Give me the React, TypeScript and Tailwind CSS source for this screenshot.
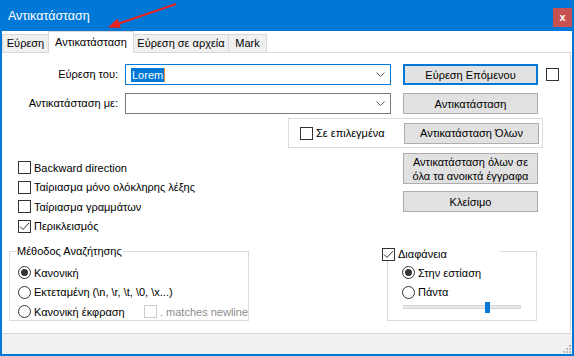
import React from 'react';
import clsx from 'clsx';

const CheckBox = ({ checked = false, disabled = false }: { checked?: boolean; disabled?: boolean }) => (
  <span
    className={clsx(
      'w-[13px] h-[13px] shrink-0 border bg-white flex items-center justify-center',
      disabled ? 'border-[#cccccc]' : 'border-[#333333]'
    )}
  >
    {checked && (
      <svg width="11" height="11" viewBox="0 0 11 11">
        <path d="M1 5.5 L4 8.5 L10 2" fill="none" stroke="#333333" strokeWidth="1" />
      </svg>
    )}
  </span>
);

const Radio = ({ checked = false }: { checked?: boolean }) => (
  <span className="w-[13px] h-[13px] shrink-0 rounded-full border border-[#333333] bg-white flex items-center justify-center">
    {checked && <span className="w-[7px] h-[7px] rounded-full bg-[#333333]" />}
  </span>
);

const Btn = ({ children, primary = false, tall = false }: { children: React.ReactNode; primary?: boolean; tall?: boolean }) => (
  <div
    className={clsx(
      'w-[135px] shrink-0 bg-[#e1e1e1] flex items-center justify-center text-center leading-[14px]',
      primary ? 'border-2 border-[#0078d7]' : 'border border-[#adadad]',
      tall ? 'h-[31px]' : 'h-[21px]'
    )}
  >
    {children}
  </div>
);

const Combo = ({ focused = false, children }: { focused?: boolean; children?: React.ReactNode }) => (
  <div
    className={clsx(
      'w-[266px] h-[21px] shrink-0 bg-white border flex items-center',
      focused ? 'border-[#0078d7]' : 'border-[#7a7a7a]'
    )}
  >
    <div className="flex-1 pl-[5px] flex items-center">{children}</div>
    <svg width="9" height="5" viewBox="0 0 9 5" className="mr-[5px]">
      <path d="M0.5 0.5 L4.5 4.5 L8.5 0.5" fill="none" stroke="#606060" strokeWidth="1" />
    </svg>
  </div>
);

const Row = ({ children }: { children: React.ReactNode }) => (
  <div className="h-[19.5px] flex items-center gap-[3px]">{children}</div>
);

export default function App() {
  return (
    <div className="w-[574px] h-[356px] bg-[#0078d7] px-[2px] pb-[2px] flex flex-col relative font-['Liberation_Sans','DejaVu_Sans',sans-serif] text-[11px] text-black">
      {/* Title bar */}
      <div className="h-[31px] flex items-start shrink-0">
        <span className="pl-[6px] pt-[7px] text-white text-[12.5px]">Αντικατάσταση</span>
        <div className="ml-auto mt-[8px] w-[19px] h-[19px] bg-[#c75050] flex items-center justify-center text-white font-bold text-[11px] leading-none">
          x
        </div>
      </div>

      <div className="flex-1 bg-white flex flex-col">
        {/* Tabs */}
        <div className="h-[21px] flex items-end shrink-0">
          <div className="w-[46px] h-[18px] bg-[#f0f0f0] border-t border-l border-[#d9d9d9] flex items-center justify-center">Εύρεση</div>
          <div className="w-[86px] h-[22px] -mb-px relative z-10 bg-white border-t border-l border-r border-[#d9d9d9] flex items-center justify-center">
            Αντικατάσταση
          </div>
          <div className="w-[94px] h-[18px] bg-[#f0f0f0] border-t border-[#d9d9d9] flex items-center justify-center">Εύρεση σε αρχεία</div>
          <div className="w-[39px] h-[18px] bg-[#f0f0f0] border-t border-l border-r border-[#d9d9d9] flex items-center justify-center">Mark</div>
        </div>

        {/* Panel */}
        <div className="h-[282px] mr-px border-t border-r border-b border-[#d9d9d9] flex flex-col shrink-0">
          {/* Find row */}
          <div className="h-[21px] mt-[11px] flex items-center">
            <span className="w-[116px] text-right">Εύρεση του:</span>
            <div className="ml-[7px]">
              <Combo focused>
                <span className="bg-[#0078d7] text-white px-px leading-[14px]">Lorem</span>
                <span className="w-px h-[14px] bg-[#e8912f]" />
              </Combo>
            </div>
            <div className="ml-[12px]">
              <Btn primary>Εύρεση Επόμενου</Btn>
            </div>
            <div className="ml-[8px]">
              <CheckBox />
            </div>
          </div>

          {/* Replace row */}
          <div className="h-[21px] mt-[8px] flex items-center">
            <span className="w-[116px] text-right">Αντικατάσταση με:</span>
            <div className="ml-[7px]">
              <Combo />
            </div>
            <div className="ml-[12px]">
              <Btn>Αντικατάσταση</Btn>
            </div>
          </div>

          {/* In selection group */}
          <div className="ml-[286px] mt-[4px] w-[255px] h-[30px] border border-[#dcdcdc] flex items-center">
            <div className="ml-[11px] flex items-center gap-[3px]">
              <CheckBox />
              <span>Σε επιλεγμένα</span>
            </div>
            <div className="ml-auto mr-[3px]">
              <Btn>Αντικατάσταση Όλων</Btn>
            </div>
          </div>

          {/* Options and buttons */}
          <div className="h-[103px] flex shrink-0">
            <div className="w-[401px] pl-[16px] pt-[10px] flex flex-col">
              <Row>
                <CheckBox />
                <span>Backward direction</span>
              </Row>
              <Row>
                <CheckBox />
                <span>Ταίριασμα μόνο ολόκληρης λέξης</span>
              </Row>
              <Row>
                <CheckBox />
                <span>Ταίριασμα γραμμάτων</span>
              </Row>
              <Row>
                <CheckBox checked />
                <span>Περικλεισμός</span>
              </Row>
            </div>
            <div className="pt-[5px] flex flex-col gap-[7px]">
              <Btn tall>
                Αντικατάσταση όλων σε
                <br />
                όλα τα ανοικτά έγγραφα
              </Btn>
              <Btn>Κλείσιμο</Btn>
            </div>
          </div>

          {/* Groups */}
          <div className="flex">
            <div className="ml-[7px] w-[240px] h-[70px] border border-[#dcdcdc] relative pl-[8px] pt-[11px]">
              <span className="absolute left-[6px] top-[-8px] bg-white px-px leading-[15px]">Μέθοδος Αναζήτησης</span>
              <Row>
                <Radio checked />
                <span>Κανονική</span>
              </Row>
              <Row>
                <Radio />
                <span>Εκτεταμένη (\n, \r, \t, \0, \x...)</span>
              </Row>
              <Row>
                <Radio />
                <span className="w-[107px]">Κανονική έκφραση</span>
                <CheckBox disabled />
                <span className="text-[#8c8c8c]">. matches newline</span>
              </Row>
            </div>

            <div className="ml-[138px] w-[150px] h-[70px] border border-[#dcdcdc] relative pl-[14px] pt-[11px]">
              <div className="absolute left-[-6px] top-[-6px] w-[118px] h-[15px] bg-white pt-[2px] flex items-start gap-[3px]">
                <CheckBox checked />
                <span className="leading-[13px]">Διαφάνεια</span>
              </div>
              <Row>
                <Radio checked />
                <span>Στην εστίαση</span>
              </Row>
              <Row>
                <Radio />
                <span>Πάντα</span>
              </Row>
              <div className="relative ml-px w-[118px] h-[11px]">
                <div className="absolute left-0 right-0 top-[3px] h-[4px] bg-[#e7eaea] border border-[#d6d6d6]" />
                <div className="absolute left-[82px] top-0 w-[5px] h-[11px] bg-[#0078d7]" />
              </div>
            </div>
          </div>
        </div>

        {/* Status strip */}
        <div className="flex-1 bg-[#f0f0f0] relative">
          <svg width="10" height="10" viewBox="0 0 10 10" className="absolute right-0 bottom-0">
            <rect x="7" y="1" width="2" height="2" fill="#bcbcbc" />
            <rect x="4" y="4" width="2" height="2" fill="#bcbcbc" />
            <rect x="7" y="4" width="2" height="2" fill="#bcbcbc" />
            <rect x="1" y="7" width="2" height="2" fill="#bcbcbc" />
            <rect x="4" y="7" width="2" height="2" fill="#bcbcbc" />
            <rect x="7" y="7" width="2" height="2" fill="#bcbcbc" />
          </svg>
        </div>
      </div>

      {/* Red annotation arrow */}
      <svg width="574" height="40" className="absolute left-0 top-0 pointer-events-none">
        <line x1="176" y1="4" x2="116" y2="24.5" stroke="#e8231e" strokeWidth="2" />
        <polygon points="108,27.5 121,28 117.5,18.5" fill="#e8231e" />
      </svg>
    </div>
  );
}
